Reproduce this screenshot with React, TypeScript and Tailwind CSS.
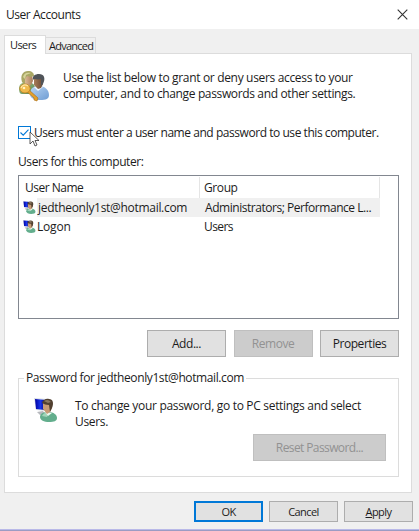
import React, { useId } from "react";

function KeyUsersIcon() {
  return (
    <svg viewBox="0 0 32 32" className="h-8 w-8 shrink-0">
      <defs>
        <linearGradient id="green" x1="0" y1="0" x2="1" y2="1">
          <stop offset="0" stopColor="#a9c58c" />
          <stop offset="1" stopColor="#4f8350" />
        </linearGradient>
        <linearGradient id="blue" x1="0" y1="0" x2="1" y2="1">
          <stop offset="0" stopColor="#b8d5f4" />
          <stop offset="1" stopColor="#6e9cd3" />
        </linearGradient>
        <linearGradient id="face" x1="0" y1="0" x2="1" y2="0">
          <stop offset="0" stopColor="#e0c09f" />
          <stop offset="1" stopColor="#a87c58" />
        </linearGradient>
        <linearGradient id="dark" x1="0" y1="0" x2="1" y2="0">
          <stop offset="0" stopColor="#a87d58" />
          <stop offset="1" stopColor="#6a4a35" />
        </linearGradient>
      </defs>
      <path d="M1 19C1 14 4 12 9 12s8 2 8 7v5H4c-2 0-3-2-3-5z" fill="url(#green)" />
      <path d="M6 5h8l1 6-2 4-3 1-4-3z" fill="url(#face)" />
      <path d="M4 12C2 5 5 1 10 1c4 0 6 2 6 5l-3 1-4-1-2 3v4l-1 1z" fill="#a9a765" />
      <path d="M5 7C6 3 9 2 13 3L8 5 7 9z" fill="#d6d49a" />
      <path d="M12 24c0-6 4-8 9-8 6 0 10 4 10 9 0 4-3 5-9 5-6 0-10-2-10-6z" fill="url(#blue)" />
      <path d="m16 17 4 4 5-4z" fill="#edf6ff" />
      <path d="M16 9h8l1 5-2 4-3 1-4-4z" fill="url(#dark)" />
      <path d="M15 10c-1-4 2-6 6-6 5 0 7 4 4 10l-2 2V9c-3 1-5 0-7 0z" fill="#505459" />
      <path d="m8 21 8 7v2l3 1 1-3-10-9z" fill="#e3a02b" stroke="#a96d19" strokeWidth=".6" />
      <ellipse cx="7" cy="18.500" rx="5.2" ry="4.5" fill="#efb94c" stroke="#bd7d20" strokeWidth=".8" />
      <path d="M3 18c1-3 4-4 7-2" stroke="#ffe7a2" strokeWidth="1.3" fill="none" />
      <circle cx="6" cy="18" r="1.3" fill="#fff0bc" />
    </svg>
  );
}

function MonitorUserIcon({ className }: { className: string }) {
  const id = useId();
  return (
    <svg viewBox="0 0 24 24" className={className}>
      <defs>
        <linearGradient id={id} x1="0" y1="0" x2="1" y2="0">
          <stop offset="0" stopColor="#0000a0" />
          <stop offset=".5" stopColor="#1735ec" />
          <stop offset="1" stopColor="#00006e" />
        </linearGradient>
      </defs>
      <path d="m0 0 13 1-1 12-10-1z" fill="#d7dce5" />
      <path d="m1 1 11 1-1 10-9-1z" fill={`url(#${id})`} />
      <path d="m3 14 6-1 2 3-5 1z" fill="#b6b8bd" />
      <path d="M6 19c0-4 4-5 8-5 6 0 9 3 9 6 0 3-3 4-8 4-5 0-9-2-9-5z" fill="#63ae8d" />
      <path d="M8 18c1-3 4-4 7-3l-2 4z" fill="#a1d5b9" />
      <path d="m11 14 3 4 4-3z" fill="#edf8ef" />
      <path d="M9 5h7l2 5-2 4-3 2-4-5z" fill="#c79b76" />
      <path d="M8 5c1-3 4-5 7-4 4 0 5 4 3 9l-2 4-1-7c-3 0-5-1-7-2z" fill="#514030" />
      <path d="M10 3c3-2 5-1 7 1l-3 1z" fill="#8b7861" />
    </svg>
  );
}

const btn = "flex items-center justify-center border border-[#adadad] bg-[#e1e1e1] whitespace-nowrap";
const disabled = "flex items-center justify-center border border-[#bfbfbf] bg-[#cccccc] text-[#929292] whitespace-nowrap";

export default function App() {
  return (
    <div className="flex h-[531px] w-[419px] flex-col overflow-hidden bg-[#f0f0f0] font-['Open_Sans','Noto_Sans',sans-serif] text-[12px] leading-4 text-[#1c1c1c]">
      <header className="flex h-[29px] shrink-0 items-center justify-between bg-white pr-[11px] pl-[6px]">
        <span className="whitespace-nowrap text-[12px] tracking-[-0.45px]">User Accounts</span>
        <svg viewBox="0 0 11 11" className="h-[11px] w-[11px]">
          <path d="m.7.7 9.6 9.6M10.3.7.7 10.3" stroke="#333" strokeWidth="1.1" />
        </svg>
      </header>

      <div className="flex h-[24px] shrink-0 items-end pl-[4px] text-[11px]">
        <div className="z-10 -mb-px flex h-[19px] w-[42px] items-center border border-b-0 border-[#dcdcdc] bg-white pl-[5px] tracking-[-0.6px]">Users</div>
        <div className="flex h-[16px] w-[50px] items-center border border-b-0 border-l-0 border-[#dcdcdc] pl-[3px] tracking-[-0.75px]">Advanced</div>
      </div>

      <main className="ml-[4px] flex h-[440px] w-[408px] shrink-0 flex-col border border-[#dcdcdc] bg-white pr-[12px] pl-[13px]">
        <div className="flex h-[72px] shrink-0 pt-[16px]">
          <KeyUsersIcon />
          <p className="ml-[13px] whitespace-nowrap">
            <span className="block tracking-[-0.33px]">Use the list below to grant or deny users access to your</span>
            <span className="block tracking-[-0.36px]">computer, and to change passwords and other settings.</span>
          </p>
        </div>
        <div className="relative flex h-[13px] shrink-0 items-center">
          <div className="flex h-[13px] w-[13px] items-center justify-center border border-[#0078d7] bg-white">
            <svg viewBox="0 0 11 11" className="h-[11px] w-[11px]">
              <path d="m1.500 5.500 2.700 2.700 5.300-5.500" fill="none" stroke="#0078d7" strokeWidth="1.1" />
            </svg>
          </div>
          <span className="ml-[3px] whitespace-nowrap tracking-[-0.45px]">Users must enter a user name and password to use this computer.</span>
          <svg viewBox="0 0 11 17" className="absolute top-[5px] left-[11px] h-[17px] w-[11px]">
            <path d="M1 1v12l3-3 2 5 2-1-2-4.500h4z" fill="white" stroke="#333" strokeWidth=".8" />
          </svg>
        </div>
        <p className="mt-[15px] h-4 shrink-0 whitespace-nowrap tracking-[-0.42px]">Users for this computer:</p>

        <section className="mt-[5px] h-[144px] shrink-0 border border-[#828790]">
          <div className="flex h-[22px] items-center pt-px">
            <div className="flex h-full w-[181px] items-center border-r border-[#e5e5e5] pl-[6px] tracking-[-0.5px]">User Name</div>
            <div className="flex h-full w-[180px] items-center border-r border-[#e5e5e5] pl-[4px] tracking-[-0.4px]">Group</div>
          </div>
          <div className="flex h-[19px] items-center">
            <MonitorUserIcon className="mr-[1px] ml-[4px] h-[13px] w-[13px] shrink-0" />
            <div className="flex h-full w-[343px] items-center bg-[#f0f0f0] whitespace-nowrap">
              <span className="w-[168px] pl-px tracking-[-0.3px]">jedtheonly1st@hotmail.com</span>
              <span className="tracking-[-0.46px]">Administrators; Performance L...</span>
            </div>
          </div>
          <div className="flex h-[19px] items-center">
            <MonitorUserIcon className="mr-[1px] ml-[4px] h-[13px] w-[13px] shrink-0" />
            <span className="w-[167px] tracking-[-0.2px]">Logon</span>
            <span className="tracking-[-0.6px]">Users</span>
          </div>
        </section>

        <div className="mt-[11px] flex h-[27px] shrink-0 justify-end gap-[7.5px] tracking-[-0.45px]">
          <button className={`${btn} w-[79px]`}>Add...</button>
          <button className={`${disabled} w-[79px]`}>Remove</button>
          <button className={`${btn} w-[79px]`}>Properties</button>
        </div>

        <fieldset className="mt-[13px] h-[107px] shrink-0 border border-[#dcdcdc]">
          <legend className="ml-[5px] h-4 px-[2px] whitespace-nowrap tracking-[-0.4px]">Password for jedtheonly1st@hotmail.com</legend>
          <div className="flex pt-[12px] pl-[15px]">
            <MonitorUserIcon className="h-6 w-6 shrink-0" />
            <p className="ml-[17px] whitespace-nowrap tracking-[-0.31px]">To change your password, go to PC settings and select<br />Users.</p>
          </div>
          <button className={`${disabled} mt-[4px] ml-[234px] h-[27px] w-[133px] tracking-[-0.6px]`}>Reset Password...</button>
        </fieldset>
      </main>

      <footer className="flex h-[36px] shrink-0 justify-end gap-[6px] pt-[8px] pr-[6px] text-[11px] tracking-[-0.55px]">
        <button className="flex h-[21px] w-[69px] items-center justify-center border-2 border-[#0078d7] bg-[#e1e1e1]">OK</button>
        <button className={`${btn} h-[21px] w-[69px]`}>Cancel</button>
        <button className={`${btn} h-[21px] w-[69px]`}><span className="underline">A</span>pply</button>
      </footer>
      <div className="h-[2px] shrink-0 border-t border-[#b9b9e8] bg-[#9c9cc4]" />
    </div>
  );
}
